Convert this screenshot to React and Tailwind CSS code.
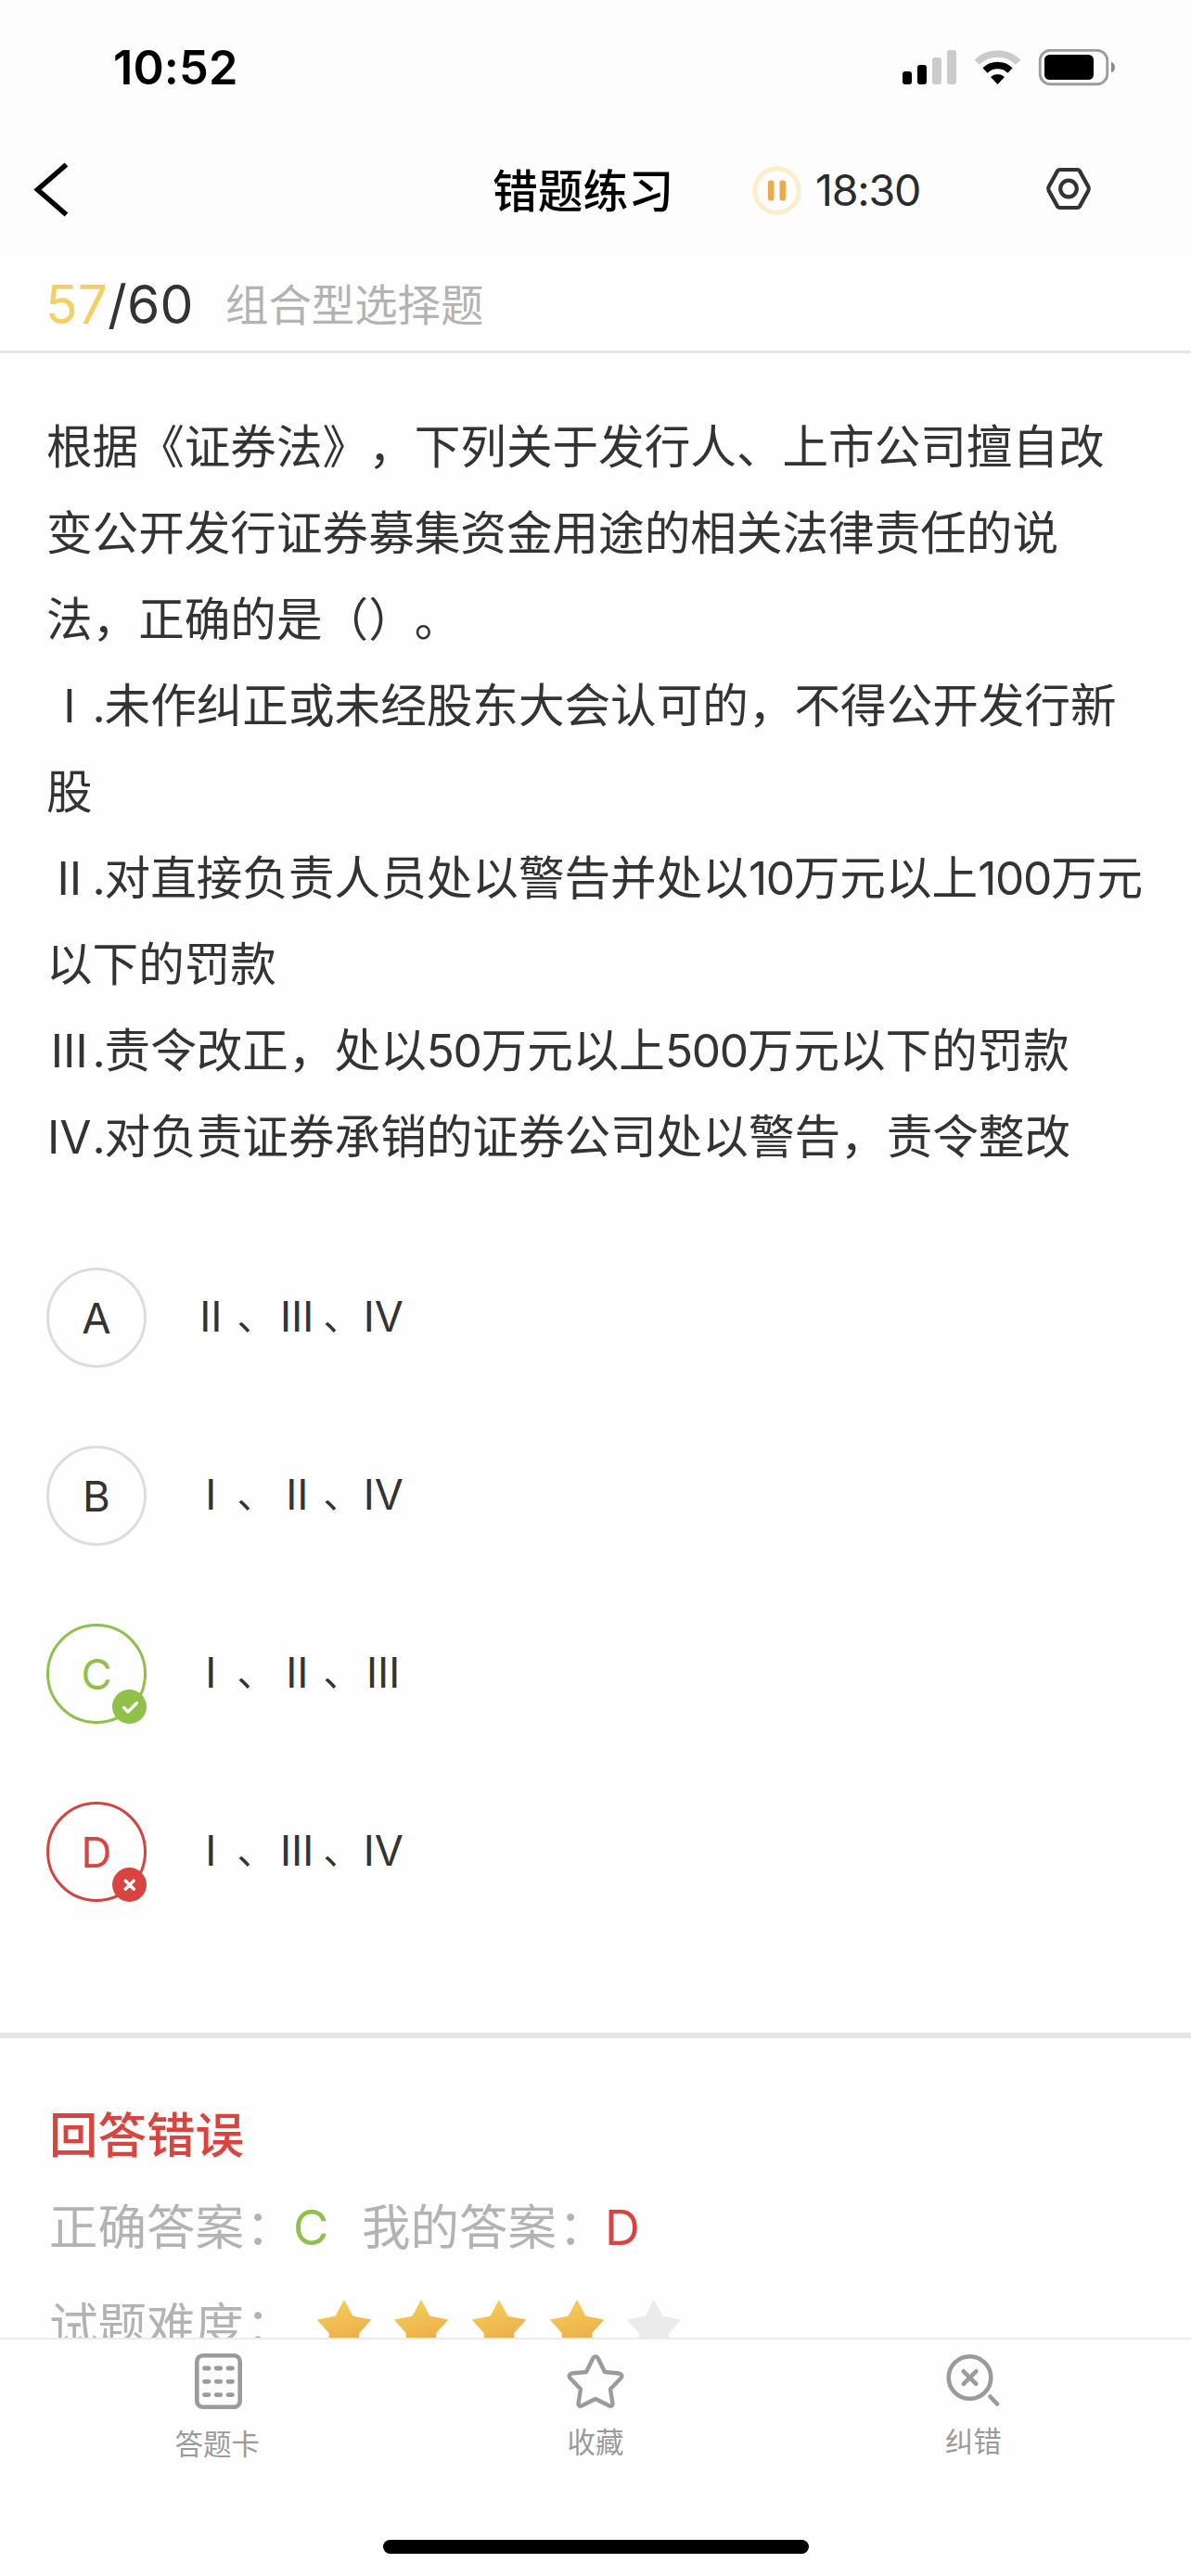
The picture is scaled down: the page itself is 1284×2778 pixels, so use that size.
const LATIN = "font-['Inter','Noto_Sans_CJK_SC',sans-serif]";

function StatusBar() {
  return (
    <div className="flex h-[146px] items-center justify-between pl-[122px] pr-[82px]">
      <span className="text-[50.500px] font-semibold leading-none tracking-[0.100px] text-black">10:52</span>
      <svg className="h-[40px] w-[230px]" viewBox="972 53 230 40">
        <g>
          <rect x="973" y="77" width="10" height="14" rx="3" fill="#000" />
          <rect x="989" y="70" width="10" height="21" rx="3" fill="#000" />
          <rect x="1005" y="62" width="10" height="29" rx="3" fill="#cbcbcb" />
          <rect x="1021" y="54" width="10" height="37" rx="3" fill="#cbcbcb" />
        </g>
        <g fill="none">
          <path d="M1053.200 67.200 A31.500 31.500 0 0 1 1097.800 67.200" stroke="#cbcbcb" strokeWidth="7.500" />
          <path d="M1062 76 A19.500 19.500 0 0 1 1089 76" stroke="#000" strokeWidth="7.500" />
          <path d="M1075.500 91 L1068 83 A11 11 0 0 1 1083 83 Z" fill="#000" />
        </g>
        <rect x="1121.250" y="54.250" width="72.500" height="36.500" rx="11" fill="none" stroke="#9c9c9c" strokeWidth="2.800" />
        <rect x="1126" y="59" width="53" height="27" rx="5.500" fill="#000" />
        <path d="M1198 66.500 Q1202 68.500 1202 72.500 Q1202 76.500 1198 78.500 Z" fill="#8a8a8a" />
      </svg>
    </div>
  );
}

function NavBar() {
  return (
    <div className="flex h-[127px] items-start pl-[36px]">
      <svg className="mt-[28px] h-[62px] w-[40px]" viewBox="0 0 40 62" fill="none">
        <path d="M35.500 3.500 L4.500 30.500 L35.500 57.500" stroke="#000" strokeWidth="5.500" />
      </svg>
      <h1 className="ml-[455px] mt-[36px] w-[195px] whitespace-nowrap text-[48.800px] font-medium leading-[50px] text-black">错题练习</h1>
      <svg className="ml-[85px] mt-[33px] size-[53px] shrink-0" viewBox="0 0 53 53">
        <circle cx="26.500" cy="26.500" r="23.700" fill="none" stroke="#fbeecb" strokeWidth="5" />
        <rect x="17" y="15.500" width="6.500" height="22" rx="2.800" fill="#ecaa4b" />
        <rect x="29.500" y="15.500" width="6.500" height="22" rx="2.800" fill="#ecaa4b" />
      </svg>
      <span className="ml-[15px] mt-[34px] w-[113px] whitespace-nowrap text-[46.500px] leading-[50px] tracking-[-1.200px] text-[#2b2b2b]">18:30</span>
      <svg className="ml-[135px] mt-[34px] h-[48px] w-[50px]" viewBox="0 0 50 48" fill="none" stroke="#333">
        <path d="M15.500 3 Q14 3 13.200 4.200 L3.600 21.600 Q2.600 23.500 3.600 25.400 L13.200 42.800 Q14 44 15.500 44 H34.500 Q36 44 36.800 42.800 L46.400 25.400 Q47.400 23.500 46.400 21.600 L36.800 4.200 Q36 3 34.500 3 Z" strokeWidth="4.200" />
        <circle cx="25" cy="23.500" r="8.800" strokeWidth="4.200" />
      </svg>
    </div>
  );
}

function ProgressRow() {
  return (
    <div className="flex h-[108px] items-center border-b-[3px] border-[#e6e6e6] pl-[49px] pt-[6px]">
      <p className="w-[159px] whitespace-nowrap text-[57px] leading-[60px] tracking-[0.200px] text-[#333]">
        <span className="text-[#f6cf62]">57</span>/60
      </p>
      <p className="ml-[35px] pt-px text-[46.400px] leading-[60px] text-[#b3b3b3]">组合型选择题</p>
    </div>
  );
}

const questionLines = [
  ["", "根据《证券法》，下列关于发行人、上市公司擅自改"],
  ["", "变公开发行证券募集资金用途的相关法律责任的说"],
  ["", "法，正确的是（）。"],
  ["Ⅰ", ".未作纠正或未经股东大会认可的，不得公开发行新"],
  ["", "股"],
  ["Ⅱ", ".对直接负责人员处以警告并处以10万元以上100万元"],
  ["", "以下的罚款"],
  ["Ⅲ", ".责令改正，处以50万元以上500万元以下的罚款"],
  ["Ⅳ", ".对负责证券承销的证券公司处以警告，责令整改"],
];

function Question() {
  return (
    <div className="pl-[50px] pt-[55px] text-[49.600px] leading-[93px] text-[#333]">
      {questionLines.map(([numeral, text]) => (
        <p key={text} className="flex whitespace-nowrap">
          {numeral && <span className="w-[49.600px] text-center">{numeral}</span>}
          <span>
            {text.split(/([.\d]+)/).map((part, i) =>
              i % 2 ? <span key={i} className="tracking-[-1.300px]">{part}</span> : part
            )}
          </span>
        </p>
      ))}
    </div>
  );
}

const CheckBadge = () => (
  <svg className="size-[37px]" viewBox="0 0 37 37" fill="none">
    <circle cx="18.500" cy="18.500" r="18.500" fill="#8fc14a" />
    <path d="M12.500 19.500 L17 24 L26.500 14.500" stroke="#fff" strokeWidth="3.200" strokeLinecap="round" strokeLinejoin="round" />
  </svg>
);

const CrossBadge = () => (
  <svg className="size-[37px]" viewBox="0 0 37 37" fill="none">
    <circle cx="18.500" cy="18.500" r="18.500" fill="#d8443f" />
    <path d="M14.300 14.300 L23.200 23.200 M23.200 14.300 L14.300 23.200" stroke="#fff" strokeWidth="3.400" strokeLinecap="round" />
  </svg>
);

const options = [
  { letter: "A", text: "Ⅱ、Ⅲ、Ⅳ", style: "border-[#ddd] text-[#333]" },
  { letter: "B", text: "Ⅰ、Ⅱ、Ⅳ", style: "border-[#ddd] text-[#333]" },
  { letter: "C", text: "Ⅰ、Ⅱ、Ⅲ", style: "border-[#8fc14a] text-[#8fc14a]", Badge: CheckBadge },
  { letter: "D", text: "Ⅰ、Ⅲ、Ⅳ", style: "border-[#d0453f] text-[#d8443f]", Badge: CrossBadge },
];

function Options() {
  return (
    <ul className="flex flex-col gap-[84px] pl-[50px] pt-[94px]">
      {options.map(({ letter, text, style, Badge }) => (
        <li key={letter} className="flex h-[108px] items-center">
          <div className={`relative flex size-[108px] items-center justify-center rounded-full border-[3px] pt-px text-[45.500px] leading-none ${style}`}>
            {letter}
            {Badge && <span className="absolute -bottom-[3px] -right-[3px] size-[37px]"><Badge /></span>}
          </div>
          <div className="ml-[46px] flex pb-[3px] leading-[60px] text-[#333]">
            {[...text].map((ch, i) => (
              <span key={i} className={ch === "、" ? "w-[46.500px] pl-[5px] text-[40px]" : "w-[46.500px] text-center text-[45px]"}>{ch}</span>
            ))}
          </div>
        </li>
      ))}
    </ul>
  );
}

function Star({ filled }) {
  return (
    <svg className="h-[58px] w-[60px]" viewBox="0 0 60 58">
      <defs>
        <linearGradient id="gold" x1="0.200" y1="0" x2="0.500" y2="1">
          <stop offset="0" stopColor="#f6d05a" />
          <stop offset="1" stopColor="#eaa746" />
        </linearGradient>
      </defs>
      <path
        d="M30 0 L39.500 17.800 L59.300 21.500 L46.300 36 V41 L48 57.500 L30 48.500 L12 57.500 L13.700 41 V36 L0.700 21.500 L20.500 17.800 Z"
        fill={filled ? "url(#gold)" : "#ebebeb"}
      />
    </svg>
  );
}

function Label({ className, text }) {
  return (
    <span className={`whitespace-nowrap ${className}`}>
      {text}
      <span className="pl-[2px]">：</span>
    </span>
  );
}

function Result() {
  return (
    <section className="h-[329px] overflow-hidden border-t-[6px] border-[#e5e5e5] pl-[53px] pt-[73px] text-[52.500px] text-[#b3b3b3]">
      <h2 className="h-[64px] font-medium leading-[64px] text-[#d8443f]">回答错误</h2>
      <p className="mt-[35px] flex h-[64px] whitespace-nowrap leading-[64px]">
        <Label className="w-[263px]" text="正确答案" />
        <span className="w-[74px] text-[#8fc14a]">C</span>
        <Label className="w-[262px]" text="我的答案" />
        <span className="text-[#d8443f]">D</span>
      </p>
      <div className="mt-[42px] flex h-[64px] leading-[64px]">
        <Label className="w-[287.500px]" text="试题难度" />
        <div className="flex gap-[23.700px] pt-[4px]">
          {[true, true, true, true, false].map((filled, i) => (
            <Star key={i} filled={filled} />
          ))}
        </div>
      </div>
    </section>
  );
}

function TabBar() {
  return (
    <nav className="grid h-[257px] grid-cols-3 border-t-2 border-[#ececec] bg-[#fefefe] px-[31px] text-[30.500px] leading-[40px] text-[#9b9b9b]">
      <div className="flex flex-col items-center pl-px pt-[15px]">
        <svg className="h-[60px] w-[51px]" viewBox="0 0 51 60" fill="none" stroke="#9b9b9b">
          <rect x="2.300" y="2.300" width="46.400" height="55.400" rx="6.500" strokeWidth="4.600" />
          <path d="M10.500 16 H15 M23.200 16 H27.800 M36 16 H40.500 M10.500 30.300 H15 M23.200 30.300 H27.800 M36 30.300 H40.500 M10.500 44.600 H15 M23.200 44.600 H27.800 M36 44.600 H40.500" strokeWidth="4.800" strokeLinecap="round" />
        </svg>
        <span className="mt-[18px] pr-[2px]">答题卡</span>
      </div>
      <div className="flex flex-col items-center pt-[15px]">
        <svg className="h-[60px] w-[62px]" viewBox="0 0 62 60" fill="none">
          <path d="M28.500 4.800 Q31 1.500 33.500 4.800 L41 20 L56.500 21.500 Q61 23 58.500 26.500 L47 38.500 L49.500 54 Q49.500 57.500 46 56.500 L31 49 L16 56.500 Q12.500 57.500 12.500 54 L15 38.500 L3.500 26.500 Q1 23 5.500 21.500 L21 20 Z" stroke="#9b9b9b" strokeWidth="4.400" strokeLinejoin="round" />
        </svg>
        <span className="mt-[16px]">收藏</span>
      </div>
      <div className="flex flex-col items-center pt-[15px]">
        <svg className="h-[60px] w-[59px]" viewBox="0 0 59 60" fill="none" stroke="#9b9b9b" strokeWidth="4.600" strokeLinecap="round">
          <circle cx="25.500" cy="26" r="22.800" />
          <path d="M18.800 19.300 L32.300 32.800 M32.300 19.300 L18.800 32.800" />
          <path d="M47.500 46.500 L55 54.500" />
        </svg>
        <span className="mt-[15px]">纠错</span>
      </div>
      <div className="col-span-3 mb-[24px] h-[15px] w-[459px] self-end justify-self-center rounded-full bg-black" />
    </nav>
  );
}

export default function App() {
  return (
    <main lang="zh-CN" className={`flex h-[2778px] w-[1284px] flex-col overflow-hidden bg-[#fefefe] [text-spacing-trim:space-all] ${LATIN}`}>
      <header className="bg-[#fdfdfd]">
        <StatusBar />
        <NavBar />
      </header>
      <ProgressRow />
      <div className="h-[1811px]">
        <Question />
        <Options />
      </div>
      <Result />
      <TabBar />
    </main>
  );
}
